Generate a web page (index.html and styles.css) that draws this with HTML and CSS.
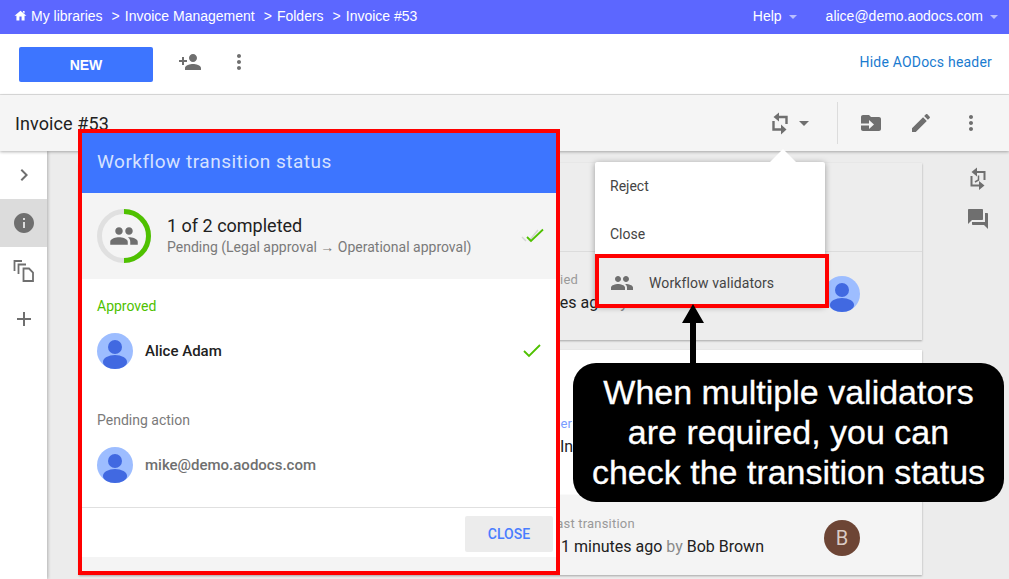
FILE: index.html
```html
<!DOCTYPE html>
<html lang="en">
<head>
    <meta charset="UTF-8">
    <title>Invoice #53</title>
    <link rel="stylesheet" href="styles.css">
</head>
<body>
<div class="page">
    <!-- top bar -->
    <div class="topbar">
        <div class="crumbs">
            <svg class="home" viewBox="0 0 24 24"><path d="M10 21v-7h4v7h5.500v-8.500H23L12 3 1 12.500h3.500V21zM16.500 3.500h3v5l-3-2.500z"/></svg>
            <span>My libraries</span>
            <span class="sep">&gt;</span><span>Invoice Management</span>
            <span class="sep">&gt;</span><span>Folders</span>
            <span class="sep">&gt;</span><span>Invoice #53</span>
        </div>
        <div class="account">
            <span>Help</span><i class="caret-light"></i>
            <span class="email">alice@demo.aodocs.com</span><i class="caret-light"></i>
        </div>
    </div>

    <!-- actions -->
    <div class="toolbar">
        <button class="btn-new">NEW</button>
        <svg class="icon add-person" viewBox="0 0 24 24"><path d="M15 12c2.210 0 4-1.790 4-4s-1.790-4-4-4-4 1.790-4 4 1.790 4 4 4zm-9-2V7H4v3H1v2h3v3h2v-3h3v-2H6zm9 4c-2.670 0-8 1.340-8 4v2h16v-2c0-2.660-5.330-4-8-4z"/></svg>
        <svg class="icon more-top" viewBox="0 0 24 24"><path d="M12 8c1.100 0 2-.9 2-2s-.9-2-2-2-2 .9-2 2 .9 2 2 2zm0 2c-1.100 0-2 .9-2 2s.9 2 2 2 2-.9 2-2-.9-2-2-2zm0 6c-1.100 0-2 .9-2 2s.9 2 2 2 2-.9 2-2-.9-2-2-2z"/></svg>
        <a class="hide-link">Hide AODocs header</a>
    </div>

    <!-- document title -->
    <div class="titlebar">
        <div class="doc-title">Invoice #53</div>
        <svg class="icon" viewBox="0 0 24 24"><path class="loop" d="M10 6h8.500v7M5.500 10v8.500H14"/><path d="M11 1.500L5.500 6l5.500 4.500zM13 13.500l5.500 5-5.500 5z"/></svg>
        <i class="caret-dark"></i>
        <span class="vline"></span>
        <svg class="icon move" viewBox="0 0 24 24"><path d="M20 6h-8l-2-2H4c-1.100 0-2 .9-2 2v12c0 1.100.9 2 2 2h16c1.100 0 2-.9 2-2V8c0-1.100-.9-2-2-2z"/><path class="move-arrow" d="M1 13.500h11"/><path class="move-head" d="M10 9l5 4.500-5 4.500z"/></svg>
        <svg class="icon edit" viewBox="0 0 24 24"><path d="M3 17.250V21h3.750L17.810 9.940l-3.750-3.750L3 17.250zM20.710 7.040c.39-.39.39-1.020 0-1.410l-2.340-2.340c-.39-.39-1.020-.39-1.410 0l-1.830 1.830 3.750 3.750 1.830-1.830z"/></svg>
        <svg class="icon more-doc" viewBox="0 0 24 24"><path d="M12 8c1.100 0 2-.9 2-2s-.9-2-2-2-2 .9-2 2 .9 2 2 2zm0 2c-1.100 0-2 .9-2 2s.9 2 2 2 2-.9 2-2-.9-2-2-2zm0 6c-1.100 0-2 .9-2 2s.9 2 2 2 2-.9 2-2-.9-2-2-2z"/></svg>
    </div>

    <div class="content">
        <div class="sidebar">
            <div class="side-item"><svg class="icon" viewBox="0 0 24 24"><path d="M10 6L8.590 7.410 13.170 12l-4.580 4.590L10 18l6-6z"/></svg></div>
            <div class="side-item active"><svg class="icon" viewBox="0 0 24 24"><path d="M12 2C6.480 2 2 6.480 2 12s4.480 10 10 10 10-4.480 10-10S17.520 2 12 2zm1 15h-2v-6h2v6zm0-8h-2V7h2v2z"/></svg></div>
            <div class="side-item"><svg class="icon" viewBox="0 0 24 24"><path class="line-icon" d="M2.500 12V2H10M6.500 15V5.500H14M11.500 9.500h5.500l4 4V22H11.500z"/></svg></div>
            <div class="side-item"><svg class="icon" viewBox="0 0 24 24"><path d="M19 13h-6v6h-2v-6H5v-2h6V5h2v6h6v2z"/></svg></div>
        </div>

        <div class="cards">
            <div class="card card-one">
                <div class="card-top"></div>
                <div class="card-row">
                    <div class="fields">
                        <div class="label">Last modified</div>
                        <div class="value">2 minutes ago <span class="by">by</span></div>
                    </div>
                    <svg class="avatar" viewBox="0 0 36 36"><use href="#person"/></svg>
                </div>
            </div>
            <div class="card card-two">
                <div class="label label-blue">Customer</div>
                <div class="value">Inc</div>
            </div>
            <div class="card card-three">
                <div class="fields">
                    <div class="label">Last transition</div>
                    <div class="value">11 minutes ago <span class="by">by</span> Bob Brown</div>
                </div>
                <div class="avatar-letter">B</div>
            </div>
        </div>

        <div class="rail">
            <svg class="icon" viewBox="0 0 24 24"><path class="loop loop-thin" d="M10 5h8.500v8M5.500 9v9.500H14"/><path d="M11 .5L5.500 5l5.500 4.500zM13 14l5.500 4.500L13 23z"/><path class="clock-hand" d="M12.500 8.500v4.500L9 15"/></svg>
            <svg class="icon" viewBox="0 0 24 24"><path d="M21 6h-2v9H6v2c0 .55.45 1 1 1h11l4 4V7c0-.55-.45-1-1-1zm-4 6V3c0-.55-.45-1-1-1H3c-.55 0-1 .45-1 1v14l4-4h10c.55 0 1-.45 1-1z"/></svg>
        </div>
    </div>

    <!-- dialog -->
    <div class="dialog">
        <div class="dialog-head">Workflow transition status</div>
        <div class="summary">
            <svg class="ring" viewBox="0 0 54 54">
                <circle cx="27" cy="27" r="24.500" class="ring-bg"/>
                <path d="M27 2.500a24.500 24.500 0 0 1 0 49" class="ring-on"/>
                <g transform="translate(12 12) scale(1.250)"><path class="ring-people" d="M16 11c1.660 0 2.990-1.340 2.990-3S17.660 5 16 5c-1.660 0-3 1.340-3 3s1.340 3 3 3zm-8 0c1.660 0 2.990-1.340 2.990-3S9.660 5 8 5C6.340 5 5 6.340 5 8s1.340 3 3 3zm0 2c-2.330 0-7 1.170-7 3.500V19h14v-2.500c0-2.330-4.670-3.500-7-3.500zm8 0c-.29 0-.62.020-.97.050 1.160.84 1.970 1.970 1.970 3.450V19h6v-2.500c0-2.330-4.670-3.500-7-3.500z"/></g>
            </svg>
            <div class="summary-text">
                <div class="summary-title">1 of 2 completed</div>
                <div class="summary-sub">Pending (Legal approval → Operational approval)</div>
            </div>
            <svg class="double-check" viewBox="0 0 24 16">
                <path class="check-grey" d="M1 9l4 4M8 13l9-11"/>
                <path class="check-green" d="M6 9l4 4L22 1.500"/>
            </svg>
        </div>
        <div class="group-label approved">Approved</div>
        <div class="person">
            <svg class="avatar" viewBox="0 0 36 36"><use href="#person"/></svg>
            <span class="person-name">Alice Adam</span>
            <svg class="check" viewBox="0 0 20 16"><path class="check-green" d="M2 8l5 5L18 2"/></svg>
        </div>
        <div class="group-label pending">Pending action</div>
        <div class="person">
            <svg class="avatar" viewBox="0 0 36 36"><use href="#person"/></svg>
            <span class="person-name muted">mike@demo.aodocs.com</span>
        </div>
        <div class="dialog-foot"><button class="btn-close">CLOSE</button></div>
        <div class="dialog-band"></div>
    </div>

    <!-- transition menu -->
    <div class="menu">
        <div class="menu-item">Reject</div>
        <div class="menu-item">Close</div>
        <div class="menu-validators">
            <svg class="icon" viewBox="0 0 24 24"><path d="M16 11c1.660 0 2.990-1.340 2.990-3S17.660 5 16 5c-1.660 0-3 1.340-3 3s1.340 3 3 3zm-8 0c1.660 0 2.990-1.340 2.990-3S9.660 5 8 5C6.340 5 5 6.340 5 8s1.340 3 3 3zm0 2c-2.330 0-7 1.170-7 3.500V19h14v-2.500c0-2.330-4.670-3.500-7-3.500zm8 0c-.29 0-.62.020-.97.050 1.160.84 1.970 1.970 1.970 3.450V19h6v-2.500c0-2.330-4.670-3.500-7-3.500z"/></svg>
            <span>Workflow validators</span>
        </div>
    </div>

    <!-- annotation -->
    <svg class="arrow" viewBox="0 0 24 62"><path d="M12 0L23 19H15V62H9V19H1z"/></svg>
    <div class="callout">When multiple validators<br>are required, you can<br>check the transition status</div>

    <svg class="defs" width="0" height="0">
        <symbol id="person" viewBox="0 0 36 36">
            <circle cx="18" cy="18" r="18" fill="#9dbdff"/>
            <circle cx="18" cy="14" r="7" fill="#4169e1"/>
            <ellipse cx="18" cy="29" rx="12" ry="7" fill="#4169e1"/>
        </symbol>
    </svg>
</div>
</body>
</html>
```

FILE: styles.css
```css
* {
    box-sizing: border-box;
}
body {
    margin: 0;
    font-family: Roboto, "Liberation Sans", sans-serif;
    color: #212121;
}
.page {
    position: relative;
    width: 1009px;
    height: 579px;
    overflow: hidden;
    display: flex;
    flex-direction: column;
    background-color: #ececec;
}
.icon {
    width: 24px;
    height: 24px;
    fill: #6f6f6f;
    flex: none;
    display: block;
}

/* top bar */
.topbar {
    height: 34px;
    flex: none;
    background-color: #5c67ff;
    color: #fff;
    font-family: "Liberation Sans", Arial, sans-serif;
    font-size: 14px;
    display: flex;
    align-items: center;
    justify-content: space-between;
    padding: 0 11px 3px 14px;
}
.crumbs {
    display: flex;
    align-items: center;
}
.home {
    width: 13px;
    height: 13px;
    fill: #fff;
    margin-right: 4px;
}
.sep {
    margin: 0 5px 0 9px;
}
.account {
    display: flex;
    align-items: center;
    padding-top: 1px;
}
.email {
    margin-left: 29px;
}
.caret-light {
    width: 0;
    height: 0;
    margin-left: 7px;
    margin-top: 1px;
    border-left: 4px solid transparent;
    border-right: 4px solid transparent;
    border-top: 4px solid #b9bfff;
}

/* toolbar */
.toolbar {
    height: 61px;
    flex: none;
    background-color: #fff;
    border-bottom: 1px solid #e0e0e0;
    display: flex;
    align-items: center;
    padding: 0 17px 4px 19px;
}
.btn-new {
    width: 134px;
    height: 35px;
    margin-top: 5px;
    border: none;
    border-radius: 2px;
    background-color: #3d75ff;
    color: #fff;
    font-family: "Liberation Sans", Arial, sans-serif;
    font-size: 14px;
    font-weight: 700;
}
.add-person {
    margin-left: 25px;
}
.more-top {
    margin-left: 25px;
}
.hide-link {
    margin-left: auto;
    color: #1a7bd0;
    font-size: 14px;
    letter-spacing: 0.2px;
}

/* title bar */
.titlebar {
    height: 56px;
    flex: none;
    position: relative;
    z-index: 2;
    background-color: #f5f5f5;
    box-shadow: 0 1px 3px rgba(0, 0, 0, 0.3);
    display: flex;
    align-items: center;
    padding: 0 26px 0 15px;
}
.doc-title {
    font-size: 18px;
    letter-spacing: 0.1px;
    margin-right: auto;
}
.loop {
    fill: none;
    stroke: #6f6f6f;
    stroke-width: 2.4;
}
.loop-thin {
    stroke-width: 2;
}
.caret-dark {
    width: 0;
    height: 0;
    margin-left: 7px;
    border-left: 5px solid transparent;
    border-right: 5px solid transparent;
    border-top: 5px solid #6f6f6f;
}
.vline {
    width: 1px;
    height: 42px;
    margin-left: 28px;
    background-color: #dcdcdc;
}
.move {
    margin-left: 21px;
}
.move-arrow {
    fill: none;
    stroke: #f5f5f5;
    stroke-width: 2;
}
.move-head {
    fill: #f5f5f5;
}
.edit,
.more-doc {
    margin-left: 26px;
}

/* main area */
.content {
    flex: 1;
    min-height: 0;
    display: flex;
}
.sidebar {
    width: 47px;
    flex: none;
    background-color: #fff;
    box-shadow: 1px 0 3px rgba(0, 0, 0, 0.25);
}
.side-item {
    height: 48px;
    display: flex;
    align-items: center;
    justify-content: center;
}
.side-item.active {
    background-color: #dcdcdc;
}
.line-icon {
    fill: none;
    stroke: #6f6f6f;
    stroke-width: 1.8;
}
.cards {
    width: 843px;
    margin-left: 32px;
    padding-top: 12px;
    flex: none;
}
.card {
    box-shadow: 0 1px 2px rgba(0, 0, 0, 0.3);
}
.card-one {
    height: 177px;
    background-color: #ededed;
    margin-bottom: 10px;
}
.card-top {
    height: 89px;
    border-bottom: 1px solid #dcdcdc;
}
.card-row {
    display: flex;
    align-items: center;
    height: 84px;
    padding-left: 427px;
}
.card-row .fields {
    width: 318px;
    margin-bottom: 3px;
}
.card-row .label {
    margin-left: -10px;
}
.card-two {
    height: 145px;
    background-color: #fff;
    padding: 66px 0 0 481px;
}
.card-three {
    height: 80px;
    background-color: #f4f4f4;
    display: flex;
    align-items: center;
    padding-left: 473px;
}
.card-three .fields {
    width: 272px;
    margin-top: 4px;
}
.card-three .label {
    margin-left: -3px;
}
.label {
    font-size: 13px;
    letter-spacing: 0.2px;
    line-height: 16px;
    color: #9a9a9a;
}
.card-two .label-blue {
    margin-left: -46px;
    color: #7a9cff;
}
.value {
    font-size: 16px;
    line-height: 22px;
    margin-top: 4px;
    white-space: nowrap;
}
.by {
    color: #8a8a8a;
}
.avatar {
    width: 36px;
    height: 36px;
    flex: none;
}
.avatar-letter {
    width: 36px;
    height: 36px;
    flex: none;
    margin-top: 6px;
    border-radius: 50%;
    background-color: #6d4535;
    color: #dacbc4;
    font-size: 20px;
    display: flex;
    align-items: center;
    justify-content: center;
}
.rail {
    flex: 1;
    padding: 16px 0 0 44px;
    display: flex;
    flex-direction: column;
    gap: 16px;
}
.clock-hand {
    fill: none;
    stroke: #6f6f6f;
    stroke-width: 1.5;
}

/* dialog */
.dialog {
    position: absolute;
    left: 78px;
    top: 129px;
    z-index: 3;
    width: 482px;
    height: 446px;
    border: 4px solid #ff0000;
    background-color: #fff;
    display: flex;
    flex-direction: column;
}
.dialog-head {
    height: 60px;
    flex: none;
    background-color: #3d75ff;
    color: #d6e2ff;
    font-size: 19px;
    letter-spacing: 0.5px;
    line-height: 58px;
    padding-left: 15px;
}
.summary {
    height: 86px;
    flex: none;
    background-color: #f4f4f4;
    display: flex;
    align-items: center;
    padding: 0 11px 0 15px;
}
.ring {
    width: 54px;
    height: 54px;
    flex: none;
}
.ring-bg {
    fill: none;
    stroke: #e0e0e0;
    stroke-width: 5;
}
.ring-on {
    fill: none;
    stroke: #4fc100;
    stroke-width: 5;
}
.ring-people {
    fill: #6f6f6f;
}
.summary-text {
    margin: 0 0 2px 16px;
    flex: 1;
}
.summary-title {
    font-size: 18px;
    line-height: 24px;
}
.summary-sub {
    font-size: 14px;
    line-height: 20px;
    margin-top: -1px;
    color: #7a7a7a;
}
.double-check {
    width: 24px;
    height: 16px;
    flex: none;
}
.check-grey {
    fill: none;
    stroke: #d5d5d5;
    stroke-width: 1.5;
}
.check-green {
    fill: none;
    stroke: #4fc100;
    stroke-width: 1.8;
}
.group-label {
    font-size: 14px;
    line-height: 20px;
    padding-left: 15px;
}
.approved {
    margin-top: 17px;
    color: #4fc100;
}
.pending {
    margin-top: 41px;
    color: #7a7a7a;
}
.person {
    margin-top: 17px;
    height: 36px;
    display: flex;
    align-items: center;
    padding: 0 14px 0 15px;
}
.person-name {
    margin-left: 12px;
    font-size: 15px;
    font-weight: 500;
    flex: 1;
}
.muted {
    color: #6f6f6f;
}
.check {
    width: 20px;
    height: 16px;
}
.dialog-foot {
    margin-top: auto;
    height: 50px;
    flex: none;
    border-top: 1px solid #e0e0e0;
    display: flex;
    justify-content: flex-end;
    align-items: flex-start;
    padding: 8px 3px 0 0;
}
.btn-close {
    width: 88px;
    height: 36px;
    border: none;
    border-radius: 2px;
    background-color: #ececec;
    color: #4a7dff;
    font-family: Roboto, sans-serif;
    font-size: 14px;
    font-weight: 500;
}
.dialog-band {
    height: 14px;
    flex: none;
    background-color: #f4f4f4;
}

/* menu */
.menu {
    position: absolute;
    left: 595px;
    top: 162px;
    z-index: 4;
    width: 230px;
    height: 144px;
    background-color: #fff;
    border-radius: 2px;
    box-shadow: 0 1px 6px rgba(0, 0, 0, 0.35);
    font-size: 14px;
    color: #444;
}
.menu::before {
    content: "";
    position: absolute;
    left: 175px;
    top: -13px;
    border-left: 13px solid transparent;
    border-right: 13px solid transparent;
    border-bottom: 13px solid #fff;
}
.menu-item {
    height: 48px;
    line-height: 48px;
    padding-left: 15px;
}
.menu-validators {
    position: relative;
    margin-top: -4px;
    width: 234px;
    height: 54px;
    border: 4px solid #ff0000;
    background-color: #ececec;
    display: flex;
    align-items: center;
    padding: 4px 0 0 11px;
}
.menu-validators span {
    margin-left: 15px;
    letter-spacing: 0.1px;
}

/* annotation */
.arrow {
    position: absolute;
    left: 681px;
    top: 304px;
    z-index: 5;
    width: 24px;
    height: 62px;
    fill: #000;
}
.callout {
    position: absolute;
    left: 573px;
    top: 363px;
    z-index: 6;
    width: 431px;
    height: 139px;
    border-radius: 23px;
    background-color: #000;
    color: #fff;
    font-family: "Liberation Sans", Arial, sans-serif;
    font-size: 34px;
    line-height: 40px;
    -webkit-text-stroke: 0.3px #fff;
    text-align: center;
    padding-top: 9px;
}
.defs {
    position: absolute;
}
```
